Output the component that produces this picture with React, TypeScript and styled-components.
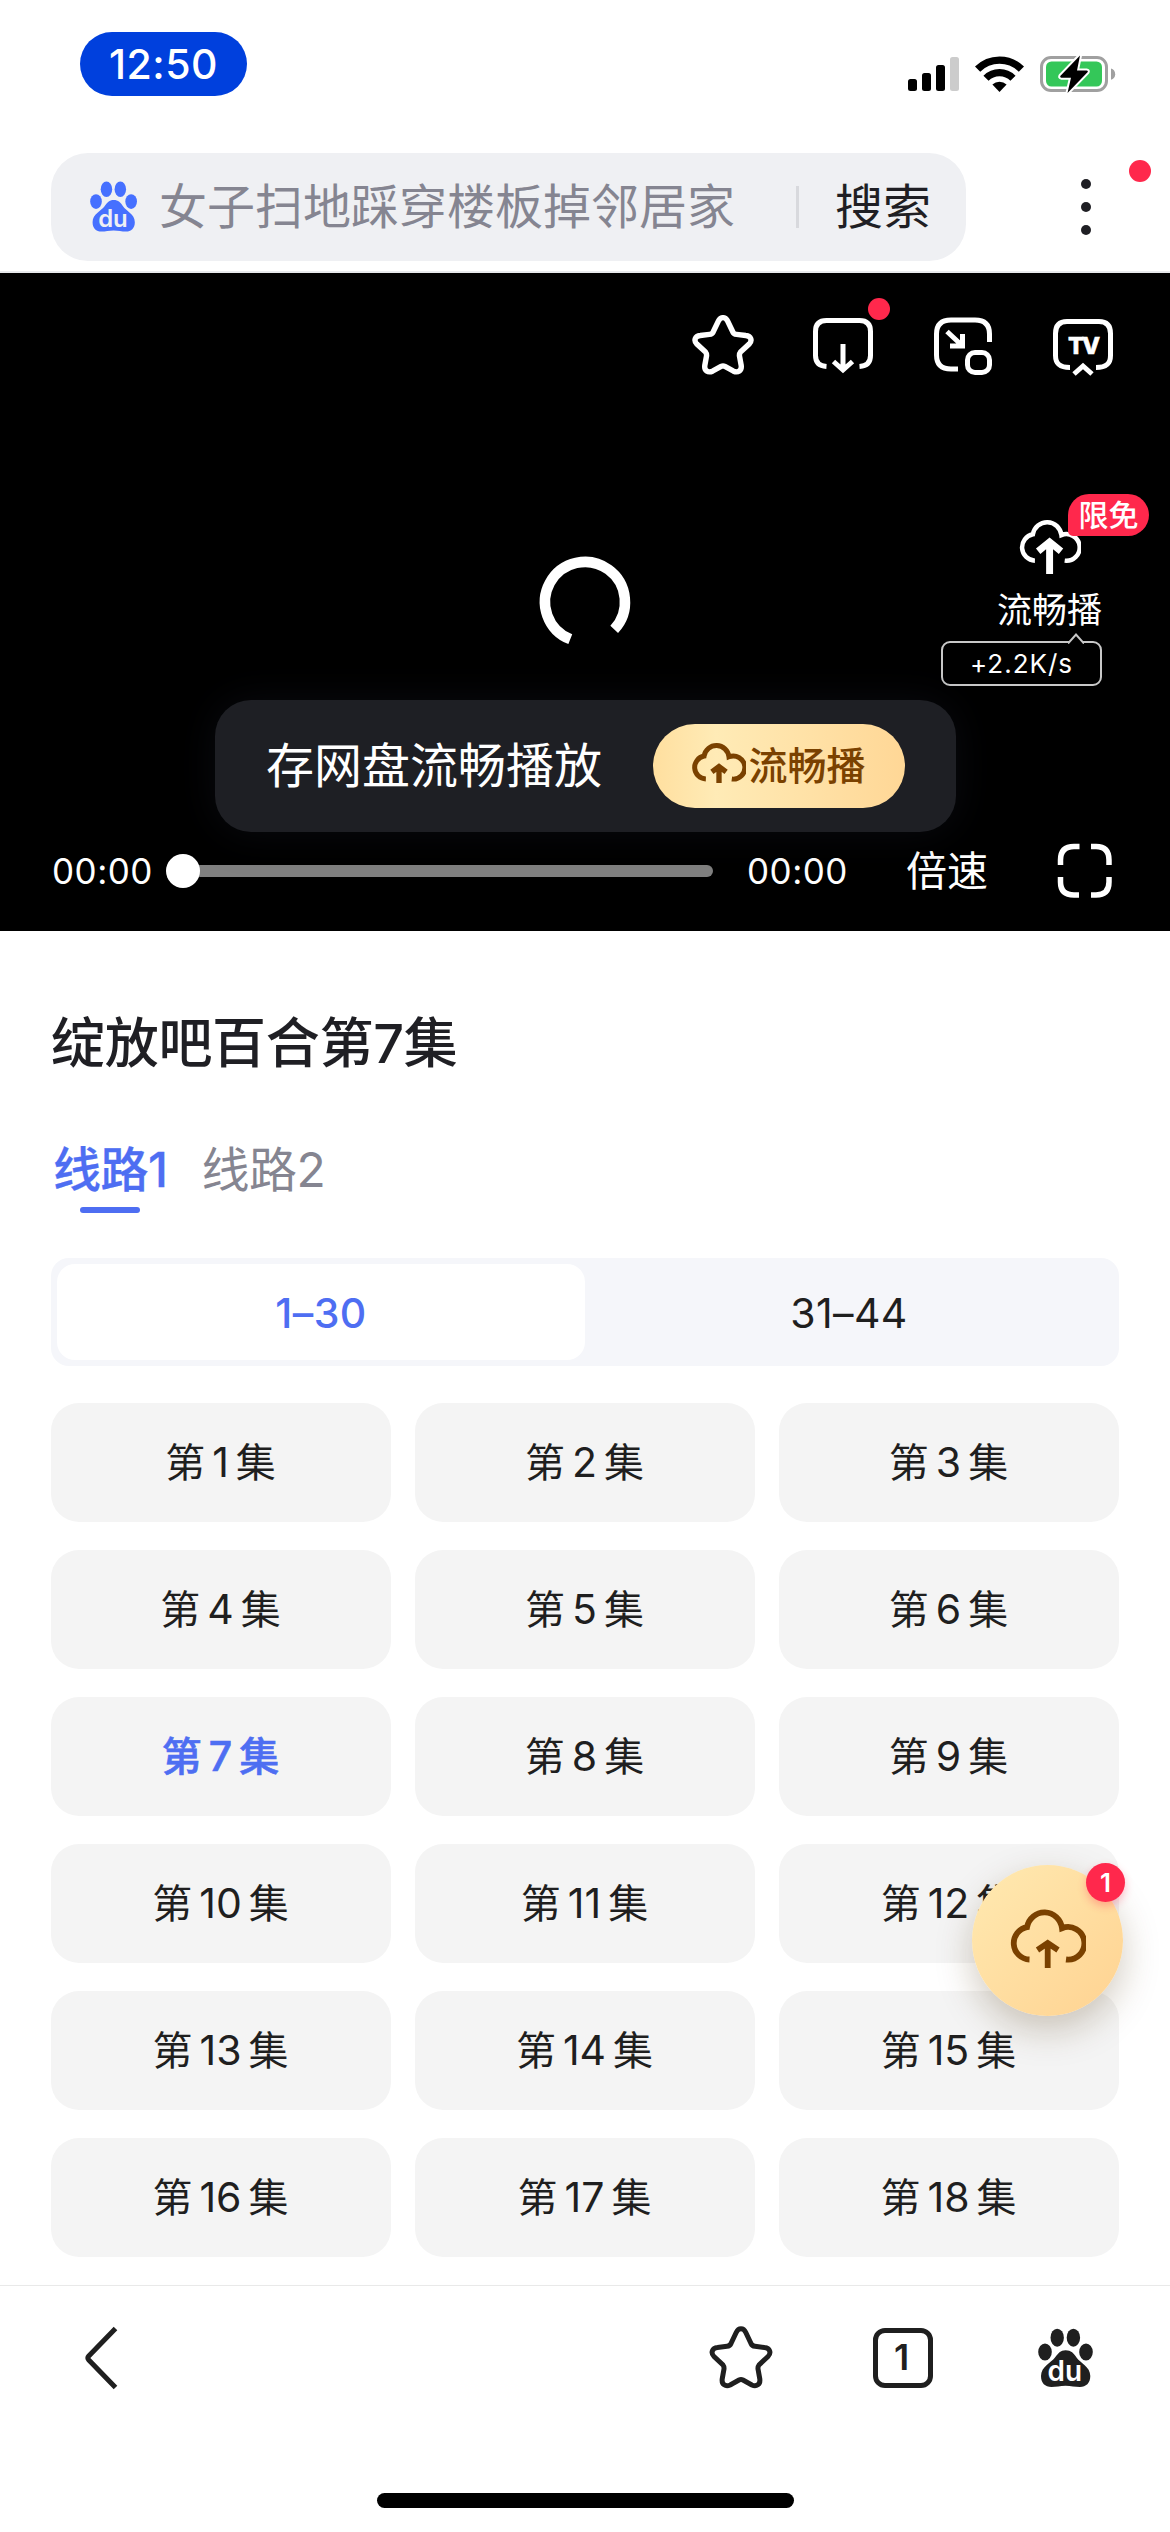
import React from "react";
import styled, { createGlobalStyle } from "styled-components";

const GlobalStyle = createGlobalStyle`
  html, body { margin: 0; padding: 0; background: #fff; }
  * { box-sizing: border-box; }
  body { font-family: Inter, "Noto Sans CJK SC", sans-serif; color: #1f1f1f; }
  svg { display: block; flex: none; }
`;

const Screen = styled.div`
  position: relative;
  width: 1170px;
  height: 2532px;
  overflow: hidden;
  display: flex;
  flex-direction: column;
  background: #fff;
`;

/* ---------- status bar ---------- */
const StatusBar = styled.header`
  flex: none;
  height: 153px;
  padding: 32px 54px 0 80px;
  display: flex;
  justify-content: space-between;
  align-items: flex-start;
`;
const Clock = styled.div`
  width: 167px;
  height: 64px;
  border-radius: 32px;
  background: #0040dd;
  color: #fff;
  font-size: 41px;
  font-weight: 500;
  letter-spacing: 0.5px;
  line-height: 64px;
  text-align: center;
`;
const StatusIcons = styled.div`
  display: flex;
  align-items: center;
  gap: 16px;
  padding-top: 22px;
`;

/* ---------- search ---------- */
const SearchRow = styled.div`
  flex: none;
  height: 120px;
  padding-left: 51px;
  display: flex;
  align-items: flex-start;
  border-bottom: 2px solid #e8e9ec;
`;
const SearchBox = styled.div`
  width: 915px;
  height: 108px;
  border-radius: 37px;
  background: #eff0f3;
  display: flex;
  align-items: center;
  padding-left: 39px;
`;
const Placeholder = styled.span`
  margin-left: 21px;
  width: 637px;
  font-size: 48px;
  line-height: 108px;
  font-weight: 400;
  color: #858591;
  white-space: nowrap;
`;
const SearchDivider = styled.i`
  width: 3px;
  height: 42px;
  background: #d8d9dd;
`;
const SearchButton = styled.span`
  margin-left: 36px;
  font-size: 48px;
  line-height: 108px;
  color: #1f1f24;
`;
const MoreButton = styled.div`
  position: relative;
  margin-left: 115px;
  width: 10px;
  height: 108px;
  display: flex;
  flex-direction: column;
  align-items: center;
  justify-content: center;
  gap: 13px;
`;
const Dot = styled.i`
  width: 10px;
  height: 10px;
  border-radius: 50%;
  background: #1f1f24;
`;
const RedDot = styled.i<{ $top: number; $left: number }>`
  position: absolute;
  top: ${(p) => p.$top}px;
  left: ${(p) => p.$left}px;
  width: 22px;
  height: 22px;
  border-radius: 50%;
  background: #ff284c;
`;

/* ---------- player ---------- */
const Player = styled.section`
  position: relative;
  flex: none;
  height: 658px;
  background: #000;
  color: #fff;
  display: flex;
  flex-direction: column;
  justify-content: space-between;
`;
const PlayerTop = styled.div`
  display: flex;
  justify-content: flex-end;
  gap: 54px;
  padding: 39px 54px 0 0;
`;
const PlayerIcon = styled.div<{ $inset?: boolean }>`
  position: relative;
  width: 66px;
  height: 66px;
  padding: ${(p) => (p.$inset ? "3px 2px" : "0")};
`;
const SpinnerBox = styled.div`
  position: absolute;
  left: 535px;
  top: 279px;
`;
const SideAction = styled.div`
  position: absolute;
  right: 68px;
  top: 244px;
  width: 161px;
  display: flex;
  flex-direction: column;
  align-items: flex-end;
`;
const SideIcon = styled.div`
  position: relative;
  margin-right: 21px;
`;
const FreeTag = styled.span`
  position: absolute;
  left: 49px;
  top: -23px;
  width: 81px;
  height: 42px;
  border-radius: 21px 21px 21px 5px;
  background: #ff284c;
  font-size: 30px;
  font-weight: 500;
  line-height: 42px;
  text-align: center;
  white-space: nowrap;
`;
const SideLabel = styled.span`
  margin-top: 11px;
  font-size: 35px;
  line-height: 50px;
`;
const SpeedBubble = styled.div`
  position: relative;
  margin-top: 6px;
  width: 161px;
  height: 45px;
  border: 2px solid #c8c8c8;
  border-radius: 9px;
  font-size: 26px;
  letter-spacing: 1px;
  line-height: 41px;
  text-align: center;
`;
const BubbleNotch = styled.div`
  position: absolute;
  right: 16px;
  top: -10px;
`;
const Toast = styled.div`
  position: absolute;
  left: 215px;
  top: 427px;
  width: 741px;
  height: 132px;
  border-radius: 36px;
  background: #1e1f24;
  box-shadow: 0 0 40px rgba(30, 31, 46, 0.35);
  display: flex;
  align-items: center;
  justify-content: space-between;
  padding: 0 51px;
`;
const ToastText = styled.span`
  font-size: 48px;
  line-height: 60px;
`;
const GoldButton = styled.div`
  width: 252px;
  height: 84px;
  border-radius: 42px;
  background: linear-gradient(90deg, #ffdf9f 0%, #ffebb6 25%, #ffd796 100%);
  color: #7a4100;
  font-size: 39px;
  font-weight: 500;
  display: flex;
  align-items: center;
  justify-content: center;
  gap: 2px;
`;
const GoldLabel = styled.span`
  line-height: 50px;
  padding-bottom: 1px;
`;
const Controls = styled.div`
  height: 120px;
  padding: 0 55px 0 52px;
  display: flex;
  align-items: center;
`;
const Time = styled.span`
  width: 114px;
  font-size: 35px;
  letter-spacing: 0.5px;
  white-space: nowrap;
`;
const Track = styled.div`
  width: 547px;
  margin-right: 34px;
  display: flex;
  align-items: center;
`;
const Knob = styled.i`
  position: relative;
  width: 34px;
  height: 34px;
  border-radius: 50%;
  background: #fff;
`;
const Rail = styled.i`
  flex: 1;
  height: 12px;
  margin-left: -6px;
  border-radius: 6px;
  background: #808080;
`;
const SpeedLabel = styled.span`
  margin-left: 45px;
  margin-right: auto;
  font-size: 41px;
  line-height: 50px;
`;

/* ---------- content ---------- */
const Content = styled.main`
  flex: 1;
  min-height: 0;
  overflow: hidden;
  padding: 77px 51px 0;
`;
const Title = styled.h1`
  margin: 0;
  font-size: 54px;
  font-weight: 500;
  letter-spacing: -0.3px;
  line-height: 72px;
  color: #1f1f24;
  white-space: nowrap;
`;
const Lines = styled.div`
  margin-top: 57px;
  display: flex;
  gap: 34px;
  padding-left: 2px;
`;
const Line = styled.div<{ $active?: boolean }>`
  display: flex;
  flex-direction: column;
  align-items: center;
  height: 76px;
  font-size: 48px;
  letter-spacing: -0.5px;
  line-height: 66px;
  font-weight: ${(p) => (p.$active ? 500 : 400)};
  -webkit-text-stroke: ${(p) => (p.$active ? "0.3px currentColor" : "0")};
  color: ${(p) => (p.$active ? "#4e6ef2" : "#858591")};
  white-space: nowrap;

  &::after {
    content: "";
    width: 60px;
    height: 6px;
    margin-top: 4px;
    border-radius: 3px;
    background: ${(p) => (p.$active ? "#4e6ef2" : "transparent")};
  }
`;
const Segments = styled.div`
  margin-top: 45px;
  height: 108px;
  border-radius: 18px;
  background: #f5f6fa;
  padding: 6px;
  display: flex;
`;
const Segment = styled.div<{ $active?: boolean }>`
  flex: 1;
  border-radius: 18px;
  background: ${(p) => (p.$active ? "#fff" : "transparent")};
  color: ${(p) => (p.$active ? "#4e6ef2" : "#1f1f1f")};
  font-size: 41px;
  letter-spacing: 0.4px;
  font-weight: ${(p) => (p.$active ? 500 : 400)};
  line-height: 98px;
  text-align: center;
`;
const Grid = styled.div`
  margin-top: 37px;
  display: grid;
  grid-template-columns: repeat(3, 1fr);
  grid-auto-rows: 119px;
  column-gap: 24px;
  row-gap: 28px;
`;
const Episode = styled.div<{ $active?: boolean }>`
  border-radius: 28px;
  background: #f4f4f4;
  display: flex;
  align-items: center;
  justify-content: center;
  gap: 7px;
  padding-right: 1px;
  line-height: 56px;
  color: ${(p) => (p.$active ? "#4e6ef2" : "#1f1f1f")};
  font-weight: ${(p) => (p.$active ? 500 : 400)};
  -webkit-text-stroke: ${(p) => (p.$active ? "0.6px currentColor" : "0")};
`;
const Hanzi = styled.span`
  font-size: 40px;
`;
const Digits = styled.span`
  font-size: 41px;
  padding-bottom: 1px;
`;

/* ---------- floating button ---------- */
const Float = styled.div`
  position: absolute;
  left: 972px;
  top: 1865px;
  width: 151px;
  height: 151px;
  border-radius: 50%;
  background: linear-gradient(135deg, #ffe6ac 15%, #ffd696 85%);
  box-shadow: 0 14px 36px rgba(80, 55, 10, 0.26);
  color: #7a4100;
  display: flex;
  align-items: center;
  justify-content: center;
`;
const FloatBadge = styled.span`
  position: absolute;
  left: 114px;
  top: -2px;
  width: 39px;
  height: 39px;
  border-radius: 50%;
  background: #ff284c;
  box-shadow: 0 4px 8px rgba(255, 40, 76, 0.3);
  color: #fff;
  font-size: 26px;
  font-weight: 600;
  line-height: 39px;
  text-align: center;
`;

/* ---------- bottom bar ---------- */
const BottomBar = styled.footer`
  flex: none;
  height: 247px;
  border-top: 1px solid #e9e9e9;
  background: #fff;
  color: #1f1f1f;
  display: flex;
  flex-direction: column;
  align-items: center;
  justify-content: space-between;
  padding-bottom: 24px;
`;
const Tools = styled.div`
  width: 100%;
  height: 143px;
  padding: 0 76px 0 81px;
  display: flex;
  align-items: center;
  justify-content: space-between;
`;
const ToolGroup = styled.div`
  width: 385px;
  display: flex;
  align-items: center;
  gap: 100px;
`;
const TabCount = styled.div`
  width: 60px;
  height: 60px;
  margin-right: 5px;
  border: 5px solid #1f1f1f;
  border-radius: 12px;
  padding-right: 3px;
  font-size: 36px;
  font-weight: 600;
  line-height: 49px;
  text-align: center;
`;
const HomeIndicator = styled.i`
  width: 417px;
  height: 15px;
  border-radius: 8px;
  background: #000;
`;

/* ---------- drawings ---------- */
const Signal = () => (
  <svg width="51" height="34" viewBox="0 0 51 34">
    <rect x="0" y="22" width="9" height="12" rx="2.5" />
    <rect x="14" y="16" width="9" height="18" rx="2.5" />
    <rect x="28" y="8" width="9" height="26" rx="2.5" />
    <rect x="42" y="0" width="9" height="34" rx="2.5" fill="#ccc" />
  </svg>
);

const Wifi = () => (
  <svg width="49" height="36" viewBox="0 0 49 36">
    <path d="M2.6 13.2a31 31 0 0 1 43.8 0" fill="none" stroke="#000" strokeWidth="7.4" />
    <path d="M11 22.2a19 19 0 0 1 27 0" fill="none" stroke="#000" strokeWidth="7.2" />
    <path d="M24.500 36L17.400 28.600a10.200 10.200 0 0 1 14.200 0z" />
  </svg>
);

const Battery = () => (
  <svg width="76" height="40" viewBox="0 0 76 40">
    <rect x="1.500" y="3.500" width="65" height="33" rx="9.500" fill="none" stroke="#a0a0a0" strokeWidth="3" />
    <path d="M71 14.500c2.600.6 4.200 3 4.200 5.700s-1.600 5-4.200 5.600z" fill="#a0a0a0" />
    <rect x="6" y="7.500" width="56" height="25" rx="5.500" fill="#34c759" />
    <path
      d="M40 1.500L20.500 21.800q-1 1.700 1 1.900H31L27.500 39 47.500 18.300q1-1.700-1-1.900H37z"
      fill="#000"
      stroke="#fff"
      strokeWidth="4"
      paintOrder="stroke"
    />
  </svg>
);

const Paw = ({ size, color, cut }: { size: number; color: string; cut: string }) => (
  <svg width={size} height={size * 1.0714} viewBox="0 0 56 60" fill={color}>
    <ellipse cx="7" cy="24" rx="6.800" ry="8.600" />
    <ellipse cx="19.200" cy="9.700" rx="6.700" ry="9" />
    <ellipse cx="35.400" cy="9.700" rx="6.700" ry="9" />
    <ellipse cx="48" cy="24" rx="6.800" ry="8.600" />
    <path d="M27.600 22.300C33 22.300 36 25.500 38.500 29.500C42 35 52.300 38.500 52.300 48C52.300 55 48 59 42 59C37 59 33 57.700 27.600 57.700C22 57.700 18 59 13.500 59C7 59 3 55 3 48C3 38.500 13 35 17 29.500C20 25.500 22.500 22.300 27.600 22.300Z" />
    <text
      x="9.500"
      y="53.500"
      fill={cut}
      fontFamily="Inter, sans-serif"
      fontWeight="600"
      fontSize="28"
      textLength="34.500"
      lengthAdjust="spacingAndGlyphs"
    >
      du
    </text>
  </svg>
);

const Star = ({ width, height, stroke }: { width: number; height: number; stroke: number }) => (
  <svg width={width} height={height} viewBox="0 0 64 63" fill="none" stroke="currentColor" strokeWidth={stroke} preserveAspectRatio="none">
    <path d="M36.800 6.500L42 17.500Q43 20 46 20.300L55.500 21.500C61 22 62.500 27 59 30.500L50 39Q48.800 40.500 49 43L50.800 53C51.500 58.500 47.500 61 42.800 59L34 54Q32 53 30 54L21.200 59C16.500 61 12.500 58.500 13.200 53L15 43Q15.200 40.500 14 39L5 30.500C1.500 27 3 22 8.500 21.500L18 20.300Q21 20 22 17.500L27.200 6.500C29.500 1.500 34.500 1.500 36.800 6.500Z" />
  </svg>
);

const Download = () => (
  <svg width="66" height="66" viewBox="0 0 66 66" fill="none" stroke="currentColor" strokeWidth="5">
    <path d="M16.500 54.500C9 54 5.500 50 5.500 43.500V19.500Q5.500 8.500 16.500 8.500H49.500Q60.500 8.500 60.500 19.500V43.500C60.500 50 57 54 49.500 54.500" />
    <path d="M33 32V58M23.500 49.500L33 58L42.500 49.500" />
  </svg>
);

const PictureInPicture = () => (
  <svg width="66" height="66" viewBox="0 0 66 66" fill="none" stroke="currentColor" strokeWidth="5">
    <path d="M28 57H21Q6.500 57 6.500 43V22Q6.500 8 21 8H45Q59.500 8 59.500 22V30" />
    <rect x="37.500" y="40.500" width="22" height="20" rx="7.500" />
    <path d="M17 19.500L31.500 33M20 34H32.500V22" />
  </svg>
);

const Tv = () => (
  <svg width="66" height="66" viewBox="0 0 66 66">
    <g fill="none" stroke="currentColor" strokeWidth="5">
      <path d="M20 55.500C9 55.500 5.500 51 5.500 43.500V21.500Q5.500 9.500 17 9.500H49Q60.500 9.500 60.500 21.500V43.500C60.500 51 57 55.500 46 55.500" />
      <path d="M24 62L33 54L42 62" />
    </g>
    <text
      x="18"
      y="41.500"
      fill="currentColor"
      stroke="currentColor"
      strokeWidth="0.6"
      fontFamily="Inter, sans-serif"
      fontWeight="800"
      fontSize="23.500"
      letterSpacing="-2"
    >
      TV
    </text>
  </svg>
);

const Cloud = ({
  width,
  stroke,
  arrow,
  arrowStroke,
}: {
  width: number;
  stroke: number;
  arrow: string;
  arrowStroke: number;
}) => (
  <svg width={width} height={(width * 70) / 76} viewBox="0 0 76 70" fill="none" stroke="currentColor" strokeWidth={stroke}>
    <path d="M19.500 53.500A16.300 16.300 0 0 1 17 21.200A17.700 18 0 0 1 52 22.200A16.300 16.300 0 1 1 56 53.500" />
    <path d={arrow} strokeWidth={arrowStroke} />
  </svg>
);

const FullScreen = () => (
  <svg width="60" height="60" viewBox="0 0 60 60" fill="none" stroke="currentColor" strokeWidth="5.500">
    <path d="M24.500 5.500H19Q5.500 5.500 5.500 19V24M36 5.500H41Q54 5.500 54 19V24M5.500 36V41Q5.500 54 19 54H24M36 54H41Q54 54 54 41V36" />
  </svg>
);

const episodes = Array.from({ length: 18 }, (_, i) => i + 1);

export default function App() {
  return (
    <Screen>
      <GlobalStyle />
      <StatusBar>
        <Clock>12:50</Clock>
        <StatusIcons>
          <Signal />
          <Wifi />
          <Battery />
        </StatusIcons>
      </StatusBar>

      <SearchRow>
        <SearchBox>
          <Paw size={48} color="#4670ff" cut="#eff0f3" />
          <Placeholder>女子扫地踩穿楼板掉邻居家</Placeholder>
          <SearchDivider />
          <SearchButton>搜索</SearchButton>
        </SearchBox>
        <MoreButton>
          <Dot />
          <Dot />
          <Dot />
          <RedDot $top={7} $left={48} />
        </MoreButton>
      </SearchRow>

      <Player>
        <PlayerTop>
          <PlayerIcon $inset>
            <Star width={62} height={60} stroke={5.6} />
          </PlayerIcon>
          <PlayerIcon>
            <Download />
            <RedDot $top={-14} $left={58} />
          </PlayerIcon>
          <PlayerIcon>
            <PictureInPicture />
          </PlayerIcon>
          <PlayerIcon>
            <Tv />
          </PlayerIcon>
        </PlayerTop>

        <SpinnerBox>
          <svg width="100" height="100" viewBox="-50 -50 100 100" fill="none" stroke="#fff" strokeWidth="10.500">
            <path d="M-14.700 37.200A40 40 0 1 1 29.200 27.300" />
          </svg>
        </SpinnerBox>

        <SideAction>
          <SideIcon>
            <Cloud width={62} stroke={5.5} arrow="M37.500 70V33M23.500 42L37.500 30.500L51.500 42" arrowStroke={8.5} />
            <FreeTag>限免</FreeTag>
          </SideIcon>
          <SideLabel>流畅播</SideLabel>
          <SpeedBubble>
            +2.2K/s
            <BubbleNotch>
              <svg width="16" height="11" viewBox="0 0 16 11">
                <path d="M0 10.500L8 1.500L16 10.500" fill="#000" stroke="#c8c8c8" strokeWidth="2" />
              </svg>
            </BubbleNotch>
          </SpeedBubble>
        </SideAction>

        <Toast>
          <ToastText>存网盘流畅播放</ToastText>
          <GoldButton>
            <Cloud width={54} stroke={7} arrow="M38 59V38M28 43.500L38 36L48 43.500" arrowStroke={7.5} />
            <GoldLabel>流畅播</GoldLabel>
          </GoldButton>
        </Toast>

        <Controls>
          <Time>00:00</Time>
          <Track>
            <Knob />
            <Rail />
          </Track>
          <Time>00:00</Time>
          <SpeedLabel>倍速</SpeedLabel>
          <FullScreen />
        </Controls>
      </Player>

      <Content>
        <Title>绽放吧百合第7集</Title>
        <Lines>
          <Line $active>线路1</Line>
          <Line>线路2</Line>
        </Lines>
        <Segments>
          <Segment $active>1–30</Segment>
          <Segment>31–44</Segment>
        </Segments>
        <Grid>
          {episodes.map((n) => (
            <Episode key={n} $active={n === 7}>
              <Hanzi>第</Hanzi>
              <Digits>{n}</Digits>
              <Hanzi>集</Hanzi>
            </Episode>
          ))}
          <Episode />
          <Episode />
          <Episode />
        </Grid>
      </Content>

      <BottomBar>
        <Tools>
          <svg width="40" height="66" viewBox="0 0 40 66" fill="none" stroke="currentColor" strokeWidth="5">
            <path d="M34.500 3.500L7.800 31Q6 33 7.800 35L34.500 62.500" />
          </svg>
          <ToolGroup>
            <Star width={64} height={63} stroke={5} />
            <TabCount>1</TabCount>
            <Paw size={56} color="#1f1f1f" cut="#fff" />
          </ToolGroup>
        </Tools>
        <HomeIndicator />
      </BottomBar>

      <Float>
        <Cloud width={76} stroke={5.8} arrow="M37.700 62V38M27.500 44L37.700 37L48 44" arrowStroke={5.8} />
        <FloatBadge>1</FloatBadge>
      </Float>
    </Screen>
  );
}
